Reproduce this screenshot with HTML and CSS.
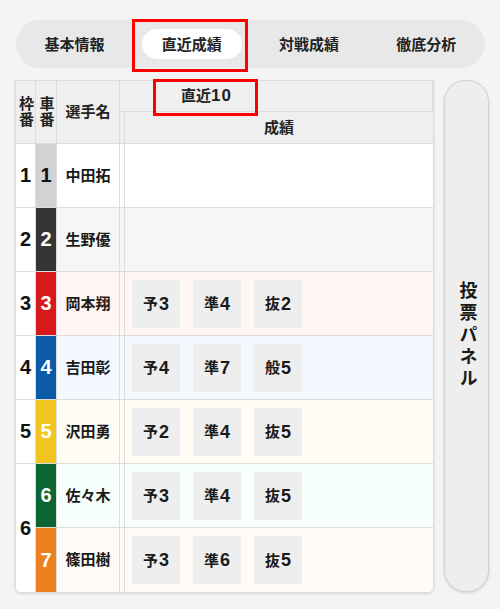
FILE: index.html
```html
<!DOCTYPE html>
<html lang="ja">
<head>
<meta charset="utf-8">
<link rel="stylesheet" href="styles.css">
</head>
<body>
<div class="page">
  <nav class="tabs">
    <div class="tab">基本情報</div>
    <div class="tab tab-active"><span class="pill">直近成績</span><span class="mark mark-tab"></span></div>
    <div class="tab">対戦成績</div>
    <div class="tab">徹底分析</div>
  </nav>
  <div class="board">
    <div class="tablewrap">
      <table class="grid">
        <colgroup>
          <col class="c-frame"><col class="c-car"><col class="c-name"><col class="c-gap"><col class="c-res">
        </colgroup>
        <thead>
          <tr class="h1">
            <th rowspan="2" class="hcell"><span class="vert">枠番</span></th>
            <th rowspan="2" class="hcell"><span class="vert">車番</span></th>
            <th rowspan="2" class="hcell">選手名</th>
            <th colspan="2" class="hcell recent">直近<span class="hn">10</span></th>
          </tr>
          <tr class="h2">
            <th class="hcell gap"></th>
            <th class="hcell last">成績</th>
          </tr>
        </thead>
        <tbody>
          <tr class="row r1">
            <td class="frame">1</td><td class="car car1">1</td><td class="name">中田拓</td><td class="gap"></td>
            <td class="res"></td>
          </tr>
          <tr class="row r2">
            <td class="frame">2</td><td class="car car2">2</td><td class="name">生野優</td><td class="gap"></td>
            <td class="res"></td>
          </tr>
          <tr class="row r3">
            <td class="frame">3</td><td class="car car3">3</td><td class="name">岡本翔</td><td class="gap"></td>
            <td class="res"><div class="chips"><span class="chip">予<span class="n">3</span></span><span class="chip">準<span class="n">4</span></span><span class="chip">抜<span class="n">2</span></span></div></td>
          </tr>
          <tr class="row r4">
            <td class="frame">4</td><td class="car car4">4</td><td class="name">吉田彰</td><td class="gap"></td>
            <td class="res"><div class="chips"><span class="chip">予<span class="n">4</span></span><span class="chip">準<span class="n">7</span></span><span class="chip">般<span class="n">5</span></span></div></td>
          </tr>
          <tr class="row r5">
            <td class="frame">5</td><td class="car car5">5</td><td class="name">沢田勇</td><td class="gap"></td>
            <td class="res"><div class="chips"><span class="chip">予<span class="n">2</span></span><span class="chip">準<span class="n">4</span></span><span class="chip">抜<span class="n">5</span></span></div></td>
          </tr>
          <tr class="row r6">
            <td class="frame frame-last" rowspan="2">6</td><td class="car car6">6</td><td class="name">佐々木</td><td class="gap"></td>
            <td class="res"><div class="chips"><span class="chip">予<span class="n">3</span></span><span class="chip">準<span class="n">4</span></span><span class="chip">抜<span class="n">5</span></span></div></td>
          </tr>
          <tr class="row r7 lastrow">
            <td class="car car7">7</td><td class="name">篠田樹</td><td class="gap"></td>
            <td class="res res-last"><div class="chips"><span class="chip">予<span class="n">3</span></span><span class="chip">準<span class="n">6</span></span><span class="chip">抜<span class="n">5</span></span></div></td>
          </tr>
        </tbody>
      </table>
    </div>
    <div class="panel"><span class="panel-text">投票パネル</span></div>
    <span class="mark mark-recent"></span>
  </div>
</div>
</body>
</html>
```

FILE: styles.css
```css
* { box-sizing: border-box; }
html, body { margin: 0; padding: 0; }
body {
  background: #f4f4f4;
  font-family: "Liberation Sans", "Noto Sans CJK JP", sans-serif;
  color: #1a1a1a;
  width: 500px;
  height: 609px;
  overflow: hidden;
}
.page { padding-top: 20px; }

.tabs {
  position: relative;
  margin: 0 15px 0 16px;
  height: 48px;
  border-radius: 24px;
  background: #e8e8e8;
  display: grid;
  grid-template-columns: repeat(4, 1fr);
  align-items: center;
  justify-items: center;
}
.tab {
  position: relative;
  width: 100%;
  height: 48px;
  display: flex;
  align-items: center;
  justify-content: center;
  font-size: 15px;
  font-weight: bold;
  color: #222;
  line-height: 1;
}
.pill {
  display: flex;
  align-items: center;
  justify-content: center;
  width: 100px;
  height: 30px;
  border-radius: 15px;
  background: #fff;
}
.mark {
  position: absolute;
  border: 3px solid #f00;
  pointer-events: none;
}
.mark-tab { left: -1px; top: -1px; width: 116px; height: 53px; }

.board {
  position: relative;
  display: flex;
  align-items: flex-start;
  gap: 10px;
  margin-top: 12px;
  padding-left: 15px;
}
.mark-recent { left: 153px; top: -1px; width: 105px; height: 37px; }

.tablewrap {
  width: 419px;
  border: 1px solid #dcdcdc;
  border-radius: 0 0 6px 6px;
  background: #fff;
  box-shadow: 0 1px 3px rgba(0,0,0,0.12);
}
.grid {
  width: 417px;
  table-layout: fixed;
  border-collapse: separate;
  border-spacing: 0;
}
.c-frame { width: 20px; }
.c-car { width: 21px; }
.c-name { width: 63px; }
.c-gap { width: 5px; }
.c-res { width: 308px; }

.grid th, .grid td {
  padding: 0;
  border-right: 1px solid #dcdcdc;
  border-bottom: 1px solid #dcdcdc;
  text-align: center;
  vertical-align: middle;
  line-height: 1.15;
}
.grid th.last, .grid td.res { border-right: none; }

.hcell {
  background: #efefef;
  font-size: 15px;
  font-weight: bold;
  color: #222;
}
.vert {
  display: inline-block;
  writing-mode: vertical-rl;
  letter-spacing: 1px;
  line-height: 1;
  margin-top: 3px;
}
.h1 th { height: 31px; }
.h2 th { height: 32px; }
.recent { text-align: left !important; padding-left: 61px !important; font-size: 15px; }
.hn { font-size: 17px; letter-spacing: 1px; }

.row td { height: 64px; }
.lastrow td { border-bottom: none; }
.frame {
  background: #fff;
  font-size: 20px;
  font-weight: bold;
  color: #111;
}
.frame-last { border-bottom: none !important; border-radius: 0 0 0 5px; }
.car {
  font-size: 20px;
  font-weight: bold;
  color: #fff;
}
.car1 { background: #d2d2d2; color: #111; }
.car2 { background: #353535; }
.car3 { background: #d8181c; }
.car4 { background: #0a5aa8; }
.car5 { background: #f3c521; }
.car6 { background: #0b6634; }
.car7 { background: #ee801f; }

.name {
  font-size: 15px;
  font-weight: bold;
  color: #1a1a1a;
}
.r1 .name, .r1 .gap, .r1 .res { background: #ffffff; }
.r2 .name, .r2 .gap, .r2 .res { background: #f6f6f6; }
.r3 .name, .r3 .gap, .r3 .res { background: #fff5f5; }
.r4 .name, .r4 .gap, .r4 .res { background: #f3f8fe; }
.r5 .name, .r5 .gap, .r5 .res { background: #fffcf3; }
.r6 .name, .r6 .gap, .r6 .res { background: #f6fffa; }
.r7 .name, .r7 .gap, .r7 .res { background: #fffaf5; }
.res-last { border-radius: 0 0 5px 0; }

.chips {
  display: flex;
  gap: 13px;
  padding-left: 7px;
}
.chip {
  width: 48px;
  height: 48px;
  background: #eeeeee;
  display: flex;
  align-items: center;
  justify-content: center;
  font-size: 15px;
  font-weight: bold;
  color: #1a1a1a;
  line-height: 1;
}
.chip .n { font-size: 18px; margin-left: 1px; }

.panel {
  width: 45px;
  height: 512px;
  border-radius: 22px;
  background: #eeeeee;
  border: 1px solid #d2d2d2;
  box-shadow: 0 1px 3px rgba(0,0,0,0.15);
  display: flex;
  align-items: center;
  justify-content: center;
}
.panel-text {
  writing-mode: vertical-rl;
  font-size: 18px;
  font-weight: bold;
  letter-spacing: 4px;
  line-height: 1;
  color: #1a1a1a;
}
```
